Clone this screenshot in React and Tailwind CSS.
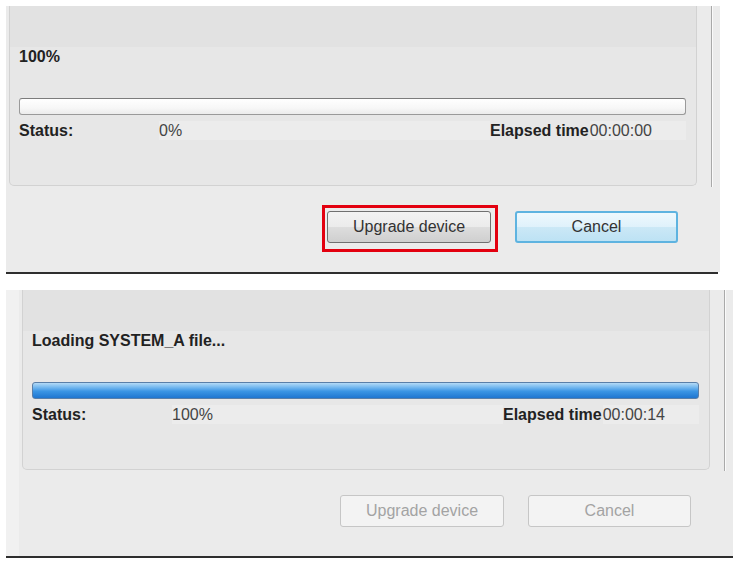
import React from "react";

const font = { fontFamily: '"Liberation Sans", Arial, sans-serif' };

const Dialog = ({ strip, label, status, elapsed, done, active }) => {
  return (
    <div className="flex bg-[#ebebeb]" style={{ width: strip ? 727 : 714 }}>
      {strip && <div className="w-[13px] bg-[#f1f1f1]" />}
      <div className="flex flex-col w-[714px]">
        {/* group box + divider line */}
        <div className="flex items-start">
          <div className="ml-[3px] w-[688px] h-[180px] flex flex-col bg-[#e7e7e7] border-x border-b border-[#d2d2d2] rounded-b-[5px]">
            <div className="h-[41px] bg-[#e2e2e2]" />
            <div className="pl-[9px] h-[20px] leading-[20px] text-[16px] font-bold text-[#222]">{label}</div>
            {done ? (
              <div className="ml-[9px] mt-[31px] w-[667px] h-[17px] rounded-[3px] border border-[#5a7fa8] bg-[linear-gradient(to_bottom,#b4daf6_0%,#7dbdf0_25%,#3b95e4_55%,#1f76d0_100%)]" />
            ) : (
              <div className="ml-[9px] mt-[31px] w-[667px] h-[17px] rounded-[3px] border border-[#9a9a9a] border-t-[#7c7c7c] bg-[linear-gradient(to_bottom,#ffffff_0%,#f7f7f7_60%,#ececec_100%)]" />
            )}
            <div className="ml-[9px] mt-[6px] w-[667px] h-[19px] flex text-[16px] leading-[19px] text-[#222]">
              <div className="w-[140px] font-bold">Status:</div>
              <div className="w-[331px] bg-[#ececec] text-[#444]">{status}</div>
              <div className="font-bold pr-[1px]">Elapsed time</div>
              <div className="flex-1 bg-[#ececec] text-[#444]">{elapsed}</div>
            </div>
          </div>
          <div className="ml-[14px] w-[2px] h-[181px] border-l border-[#a9a9a9] border-r border-r-[#fafafa]" />
        </div>
        {/* buttons */}
        <div className="mt-[24px] pl-[321px] flex gap-[24px] text-[16px]">
          {active ? (
            <>
              <div className="relative">
                <div className="w-[164px] h-[32px] flex items-center justify-center rounded-[3px] border border-[#707070] text-[#333] bg-[linear-gradient(to_bottom,#f3f3f3_0%,#ebebeb_50%,#dddddd_51%,#cfcfcf_100%)]">
                  Upgrade device
                </div>
                <div className="absolute -left-[5px] -top-[6px] w-[176px] h-[47px] border-[3px] border-[#e3000f]" />
              </div>
              <div className="w-[163px] h-[32px] flex items-center justify-center rounded-[3px] border-2 border-[#5eb3e0] text-[#333] bg-[linear-gradient(to_bottom,#eef8fd_0%,#dff1fb_50%,#cbe8f6_51%,#bde2f4_100%)]">
                Cancel
              </div>
            </>
          ) : (
            <>
              <div className="w-[164px] h-[32px] flex items-center justify-center rounded-[3px] border border-[#c6c6c6] bg-[#f3f3f3] text-[#a3a3a3]">
                Upgrade device
              </div>
              <div className="w-[163px] h-[32px] flex items-center justify-center rounded-[3px] border border-[#c6c6c6] bg-[#f3f3f3] text-[#a3a3a3]">
                Cancel
              </div>
            </>
          )}
        </div>
        <div className="h-[29px]" />
      </div>
    </div>
  );
};

export default function App() {
  return (
    <div className="w-[737px] h-[565px] bg-white overflow-hidden" style={font}>
      <div className="pt-[6px] pl-[6px]">
        <Dialog label="100%" status="0%" elapsed="00:00:00" active />
        <div className="w-[712px] h-[2px] bg-[#2e2e2e]" />
      </div>
      <div className="pt-[16px] pl-[6px]">
        <Dialog strip label="Loading SYSTEM_A file..." status="100%" elapsed="00:00:14" done />
        <div className="w-[727px] h-[2px] bg-[#2e2e2e]" />
      </div>
    </div>
  );
}
